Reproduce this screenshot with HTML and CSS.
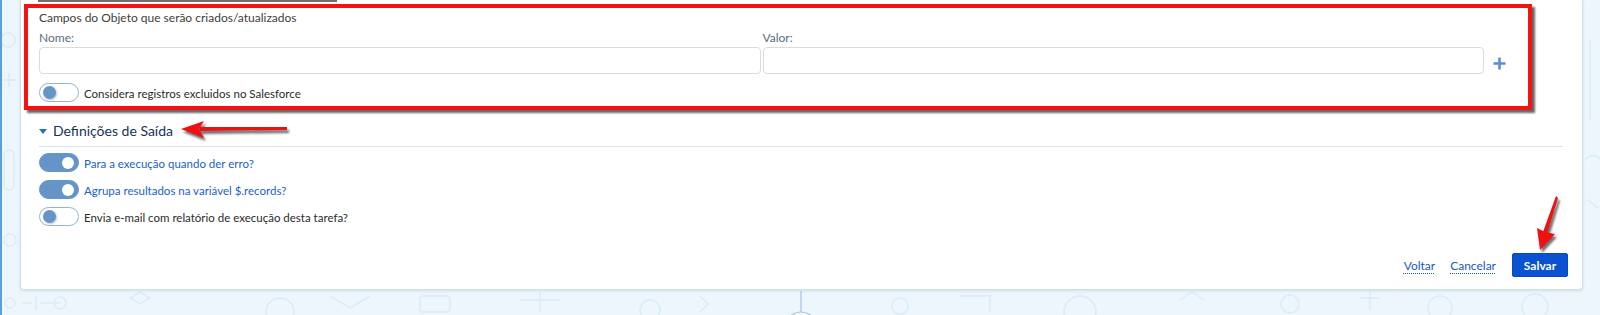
FILE: index.html
```html
<!DOCTYPE html>
<html lang="pt-BR">
  <head>
    <meta charset="UTF-8" />
    <meta name="viewport" content="width=device-width, initial-scale=1.0" />
    <title>Tarefa - Salesforce</title>
    <link rel="stylesheet" href="styles.css">
  </head>
  <body>
    <!-- fundo com desenhos claros -->
    <svg class="backdrop" width="1600" height="315" viewBox="0 0 1600 315">
      <g fill="none" stroke="#d9ecf8" stroke-width="1.5">
        <circle cx="8" cy="40" r="7" />
        <path d="M2 80 h14 M9 73 v14" />
        <rect x="4" y="150" width="10" height="40" rx="5" />
        <circle cx="10" cy="240" r="6" />
        <circle cx="10" cy="303" r="5" />
        <path d="M22 303 h10 M36 296 v14 M40 303 h20" />
        <circle cx="60" cy="303" r="6" />
        <path d="M130 298 l10 -6 l10 6 l-10 6 z" />
        <circle cx="280" cy="312" r="14" />
        <path d="M330 296 l20 12 l20 -12" />
        <rect x="420" y="296" width="30" height="16" rx="3" />
        <path d="M520 300 h40 M540 292 v20" />
        <circle cx="650" cy="310" r="10" />
        <path d="M700 296 l8 8 l-8 8" />
        <circle cx="900" cy="306" r="8" />
        <path d="M960 296 h30 v16" />
        <circle cx="1080" cy="312" r="16" />
        <path d="M1180 300 l12 -8 l12 8" />
        <circle cx="1290" cy="304" r="9" />
        <path d="M1360 298 h20 M1370 290 v20" />
        <circle cx="1440" cy="308" r="12" />
        <circle cx="1535" cy="307" r="13" />
        <path d="M1590 40 v80 M1586 160 a8 8 0 0 1 14 0 M1588 200 l10 8" />
      </g>
      <g fill="none" stroke="#a9c3da" stroke-width="1.2">
        <path d="M801 291 v21" />
        <circle cx="801" cy="328" r="16" />
      </g>
    </svg>

    <div class="card">
      <div class="top-bar"></div>

      <section class="fields">
        <div class="fields-title">Campos do Objeto que serão criados/atualizados</div>
        <div class="fields-grid">
          <label class="field-label" for="nome">Nome:</label>
          <label class="field-label" for="valor">Valor:</label>
          <span></span>
          <input id="nome" class="field-input" type="text" />
          <input id="valor" class="field-input" type="text" />
          <button class="add-btn" type="button" title="Adicionar">
            <svg width="13" height="13" viewBox="0 0 13 13">
              <path d="M6.5 0.5 v12 M0.5 6.5 h12" stroke="#5b8fcc" stroke-width="2.6" />
            </svg>
          </button>
        </div>
        <div class="toggle-row">
          <span class="toggle"></span>
          <span class="toggle-text">Considera registros excluidos no Salesforce</span>
        </div>
      </section>

      <div class="section-head">
        <span class="caret"></span>Definições de Saída
      </div>

      <div class="toggle-list">
        <div class="toggle-row">
          <span class="toggle on"></span>
          <span class="toggle-text link">Para a execução quando der erro?</span>
        </div>
        <div class="toggle-row">
          <span class="toggle on"></span>
          <span class="toggle-text link">Agrupa resultados na variável $.records?</span>
        </div>
        <div class="toggle-row">
          <span class="toggle"></span>
          <span class="toggle-text">Envia e-mail com relatório de execução desta tarefa?</span>
        </div>
      </div>

      <div class="actions">
        <a class="action-link" href="#">Voltar</a>
        <a class="action-link" href="#">Cancelar</a>
        <button class="btn-save" type="button">Salvar</button>
      </div>
    </div>

    <!-- setas de anotação -->
    <svg class="annotations" width="1600" height="315" viewBox="0 0 1600 315">
      <defs>
        <filter id="soft" x="-20%" y="-20%" width="140%" height="140%">
          <feGaussianBlur stdDeviation="0.8" />
        </filter>
      </defs>
      <g transform="translate(2 3)" fill="#6e6e6e" filter="url(#soft)">
        <polygon points="287,127 287,130 200,131 200,127" />
        <polygon points="181,129 204,121 199,129 204,138" />
        <polygon points="1556,196 1558,198 1547,234 1543,232" />
        <polygon points="1540,250 1537,228 1545,232 1555,234" />
      </g>
      <g fill="#f01010">
        <polygon points="287,127 287,130 200,131 200,127" />
        <polygon points="181,129 204,121 199,129 204,138" />
        <polygon points="1556,196 1558,198 1547,234 1543,232" />
        <polygon points="1540,250 1537,228 1545,232 1555,234" />
      </g>
    </svg>
  </body>
</html>
```

FILE: styles.css
```css
body {
  font-family: 'Lato', 'Noto Sans', sans-serif;
  margin: 0;
  padding: 0 0 0 18px;
  width: 1600px;
  height: 315px;
  box-sizing: border-box;
  overflow: hidden;
  position: relative;
  background-color: #ecf6fc; /* fundo azul claro */
  border-left: 2px solid #5aa0dc;
  color: #3e3e3c;
}

.backdrop,
.annotations {
  position: absolute;
  top: 0;
  left: -2px;
  pointer-events: none;
}

.annotations {
  z-index: 5;
}

.card {
  position: relative;
  width: 1563px;
  box-sizing: border-box;
  padding: 0 19px 12px 18px;
  background-color: #fff;
  border: 1px solid #cfdfed;
  border-top: none;
  border-radius: 0 0 4px 4px;
  box-shadow: 0 1px 3px rgba(120, 160, 200, 0.25);
}

.top-bar {
  width: 299px;
  height: 2px;
  margin-left: -1px;
  background-color: #6f6f6f;
}

/* caixa vermelha de destaque */
.fields {
  margin: 2px 31px 0 -15px;
  padding: 2px 21px 4px 11px;
  border: 4px solid #f51212;
  box-shadow: 3px 3px 2px rgba(0, 0, 0, 0.6);
}

.fields-title {
  font-size: 12px;
  line-height: 16px;
  color: #3e3e3c;
}

.fields-grid {
  display: grid;
  grid-template-columns: 1fr 1fr 21px;
  column-gap: 2px;
  margin-top: 4px;
}

.field-label {
  font-size: 12px;
  line-height: 16px;
  color: #5b6a80;
  margin-bottom: 1px;
}

.field-input {
  height: 27px;
  box-sizing: border-box;
  border: 1px solid #dddbda;
  border-radius: 4px;
  background: #fff;
  margin: 0;
}

.add-btn {
  border: none;
  background: none;
  padding: 0;
  margin: 6px 0 0 6px;
  width: 15px;
  height: 15px;
  display: flex;
  align-items: center;
  justify-content: center;
  align-self: center;
}

.toggle-row {
  display: flex;
  align-items: center;
  height: 19px;
}

.fields .toggle-row {
  margin-top: 9px;
}

.toggle {
  width: 40px;
  height: 19px;
  box-sizing: border-box;
  border: 1px solid #94b3d8;
  border-radius: 10px;
  background-color: #fff;
  display: flex;
  align-items: center;
  padding: 0 3px;
  flex-shrink: 0;
}

.toggle::after {
  content: '';
  width: 13px;
  height: 13px;
  border-radius: 50%;
  background-color: #6594c9;
  box-shadow: 1px 1px 2px rgba(0, 0, 0, 0.25);
}

.toggle.on {
  background-color: #6594c9;
  border-color: #6594c9;
  justify-content: flex-end;
  padding: 0 4px;
}

.toggle.on::after {
  width: 12px;
  height: 12px;
  background-color: #fff;
  box-shadow: none;
}

.toggle-text {
  margin-left: 5px;
  font-size: 11.5px;
  line-height: 16px;
  padding-top: 3px;
  color: #2b2b2b;
}

.toggle-text.link {
  color: #1b5fc9;
}

.section-head {
  margin-top: 10px;
  padding-bottom: 4px;
  border-bottom: 1px solid #d8e2ec;
  font-size: 14px;
  line-height: 22px;
  color: #16325c;
  display: flex;
  align-items: center;
}

.caret {
  width: 0;
  height: 0;
  border-left: 4px solid transparent;
  border-right: 4px solid transparent;
  border-top: 5px solid #2a6ebf;
  margin: 0 6px 0 0;
}

.toggle-list {
  margin-top: 6px;
  display: flex;
  flex-direction: column;
  gap: 8px;
}

.actions {
  display: flex;
  justify-content: flex-end;
  align-items: center;
  gap: 15px;
  margin: 27px -5px 0 0;
}

.action-link {
  font-size: 12px;
  color: #1a58c8;
  text-decoration: underline dotted;
  text-underline-offset: 3px;
}

.btn-save {
  width: 56px;
  height: 24px;
  margin-left: 1px;
  border: 1px solid #0a47bf;
  border-radius: 2px;
  background-color: #0b52d1;
  color: #fff;
  font-family: 'Lato', 'Noto Sans', sans-serif;
  font-weight: 700;
  font-size: 12px;
  padding: 0;
}
```
